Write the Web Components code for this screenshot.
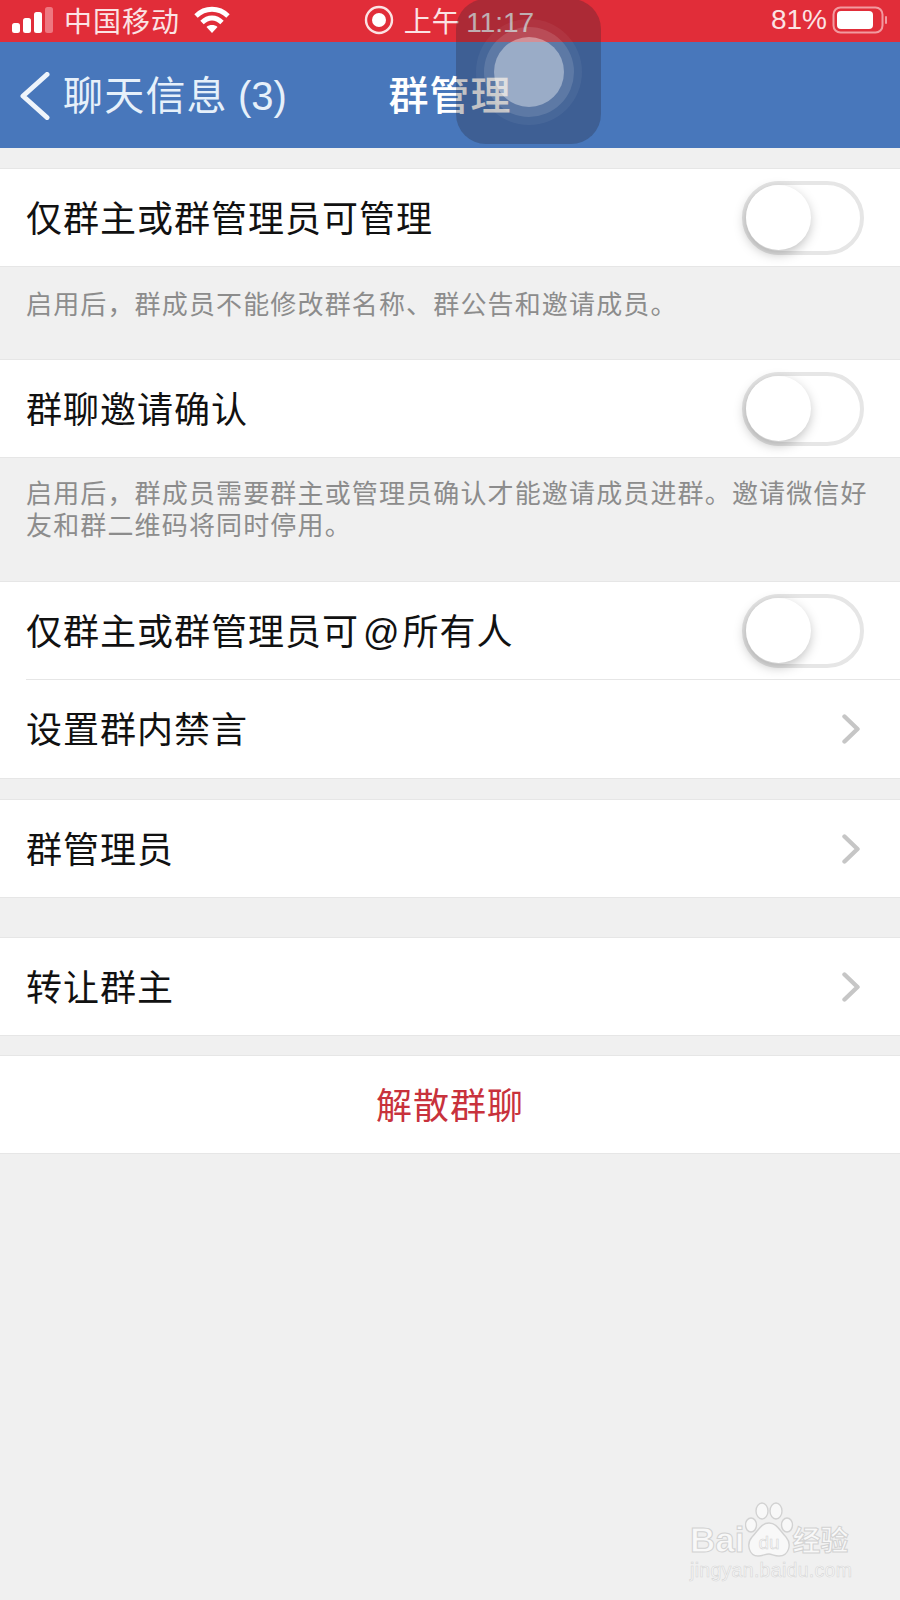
<!DOCTYPE html>
<html lang="zh">
<head>
<meta charset="utf-8">
<title>群管理</title>
<style>
    html, body { margin: 0; padding: 0; }
    body {
        width: 900px;
        height: 1600px;
        overflow: hidden;
        background: #f0f0f0;
        font-family: "Noto Sans CJK SC", "Liberation Sans", sans-serif;
        position: relative;
    }
</style>
</head>
<body>
<status-bar></status-bar>
<nav-bar title="群管理"></nav-bar>

<setting-group style="margin-top: 20px">
    <setting-row label="仅群主或群管理员可管理" kind="toggle"></setting-row>
</setting-group>
<group-note style="height: 92px">启用后，群成员不能修改群名称、群公告和邀请成员。</group-note>

<setting-group>
    <setting-row label="群聊邀请确认" kind="toggle"></setting-row>
</setting-group>
<group-note style="height: 123px; padding-top: 18px">启用后，群成员需要群主或管理员确认才能邀请成员进群。邀请微信好友和群二维码将同时停用。</group-note>

<setting-group>
    <setting-row label="仅群主或群管理员可<span class='at'>@</span>所有人" kind="toggle"></setting-row>
    <setting-row label="设置群内禁言" kind="arrow" divider></setting-row>
</setting-group>

<setting-group style="margin-top: 20px">
    <setting-row label="群管理员" kind="arrow"></setting-row>
</setting-group>

<setting-group style="margin-top: 39px">
    <setting-row label="转让群主" kind="arrow"></setting-row>
</setting-group>

<setting-group style="margin-top: 19px">
    <setting-row label="解散群聊" kind="danger"></setting-row>
</setting-group>

<assistive-touch></assistive-touch>
<baidu-mark></baidu-mark>

<script>
class StatusBar extends HTMLElement {
    constructor() {
        super();
        this.attachShadow({ mode: 'open' });
        this.shadowRoot.innerHTML = `
        <style>
        :host {
            display: grid;
            grid-template-columns: 1fr auto 1fr;
            align-items: center;
            height: 42px;
            padding: 0 14px 5px 12px;
            box-sizing: border-box;
            background: #e12d39;
            color: #fbe3e4;
            font-size: 28px;
        }
        .side { display: flex; align-items: center; }
        .right { justify-content: flex-end; }
        .mid { display: flex; align-items: center; gap: 10px; }
        .carrier { margin-left: 10px; letter-spacing: 1px; }
        .wifi { margin-left: 14px; }
        svg { display: block; }
        .num { font-family: "Liberation Sans", sans-serif; }
        .pct { margin-right: 5px; }
        .battery { margin-right: -2px; }
        </style>
        <div class="side">
            <svg width="42" height="26" viewBox="0 0 42 26">
                <rect x="0" y="16" width="8" height="10" rx="2.5" fill="#fff"/>
                <rect x="11" y="11" width="8" height="15" rx="2.5" fill="#fff"/>
                <rect x="22" y="5" width="8" height="21" rx="2.5" fill="#fff"/>
                <rect x="33" y="0" width="8" height="26" rx="2.5" fill="#ee7780"/>
            </svg>
            <span class="carrier">中国移动</span>
            <svg class="wifi" width="36" height="28" viewBox="0 0 36 28" fill="none" stroke="#fff" stroke-width="4.8">
                <path d="M2 10 C11 1 25 1 34 10"/>
                <path d="M8 16.5 C14 10.5 22 10.5 28 16.5"/>
                <path d="M18 27 L12.5 21 C15.5 18.4 20.5 18.4 23.5 21 Z" fill="#fff" stroke="none"/>
            </svg>
        </div>
        <div class="mid">
            <svg width="30" height="30" viewBox="0 0 30 30">
                <circle cx="15" cy="15" r="13" fill="none" stroke="#fbe3e4" stroke-width="2.4"/>
                <circle cx="15" cy="15" r="7" fill="#fff"/>
            </svg>
            <span>上午 <span class="num">11:17</span></span>
        </div>
        <div class="side right">
            <span class="num pct">81%</span>
            <svg class="battery" width="56" height="28" viewBox="0 0 56 28">
                <rect x="1.5" y="1.5" width="49" height="25" rx="7" fill="none" stroke="#f29aa0" stroke-width="2"/>
                <rect x="5" y="5" width="36" height="18" rx="4" fill="#fff"/>
                <rect x="53" y="10" width="2" height="8" rx="1" fill="#f29aa0"/>
            </svg>
        </div>
        `;
    }
}

class NavBar extends HTMLElement {
    constructor() {
        super();
        this.attachShadow({ mode: 'open' });
        const title = this.getAttribute('title') || '';
        this.shadowRoot.innerHTML = `
        <style>
        :host {
            display: grid;
            grid-template-columns: 1fr auto 1fr;
            align-items: center;
            height: 106px;
            padding: 0 20px 4px;
            box-sizing: border-box;
            background: #4877bb;
            color: #e6f0fa;
        }
        .back { display: flex; align-items: center; gap: 13px; font-size: 40px; letter-spacing: 1.2px; }
        .back svg { display: block; margin-top: 5px; }
        .num { font-family: "Liberation Sans", sans-serif; letter-spacing: 0; }
        h1 { margin: 0; font-size: 40px; font-weight: 500; color: #fff; letter-spacing: 1px; }
        </style>
        <div class="back">
            <svg width="30" height="48" viewBox="0 0 30 48" fill="none" stroke="#eef4fb" stroke-width="5" stroke-linecap="round" stroke-linejoin="round">
                <path d="M27 2.5 L3 24 L27 45.5"/>
            </svg>
            <span>聊天信息 <span class="num">(3)</span></span>
        </div>
        <h1>${title}</h1>
        <div></div>
        `;
    }
}

class SettingGroup extends HTMLElement {
    constructor() {
        super();
        this.attachShadow({ mode: 'open' });
        this.shadowRoot.innerHTML = `
        <style>
        :host {
            display: block;
            background: #fff;
            border-top: 1px solid #e6e6e6;
            border-bottom: 1px solid #e6e6e6;
        }
        </style>
        <slot></slot>
        `;
    }
}

class SettingRow extends HTMLElement {
    constructor() {
        super();
        this.attachShadow({ mode: 'open' });
        const label = this.getAttribute('label') || '';
        const kind = this.getAttribute('kind') || 'arrow';
        let end = '';
        if (kind === 'toggle') {
            end = '<div class="toggle"><div class="knob"></div></div>';
        } else if (kind === 'arrow') {
            end = `<svg width="18" height="30" viewBox="0 0 18 30" fill="none" stroke="#c6c6c6" stroke-width="4.4" stroke-linecap="round" stroke-linejoin="round"><path d="M2.5 2.5 L15.5 15 L2.5 27.5"/></svg>`;
        }
        this.shadowRoot.innerHTML = `
        <style>
        :host {
            display: block;
            padding-left: 26px;
            font-size: 36px;
            color: #111;
        }
        .row {
            display: flex;
            align-items: center;
            justify-content: space-between;
            height: 97px;
            padding-right: 36px;
            letter-spacing: 1px;
        }
        .row > span { margin-bottom: 4px; }
        .at { font-family: "Liberation Sans", sans-serif; margin: 0 2px 0 4px; }
        :host([divider]) .row { border-top: 1px solid #e6e6e6; height: 98px; }
        :host([kind="arrow"]) .row { padding-right: 40px; }
        :host([kind="danger"]) { padding-left: 0; }
        :host([kind="danger"]) .row {
            justify-content: center;
            padding-right: 0;
            color: #c8323c;
        }
        .toggle {
            position: relative;
            width: 122px;
            height: 74px;
            box-sizing: border-box;
            border: 4px solid #e6e6e6;
            border-radius: 37px;
            background: #fff;
        }
        .knob {
            position: absolute;
            left: 0;
            top: 0;
            width: 65px;
            height: 65px;
            border-radius: 50%;
            background: #fff;
            box-shadow: -1px 4px 12px rgba(0,0,0,.26);
        }
        </style>
        <div class="row"><span>${label}</span>${end}</div>
        `;
    }
}

class GroupNote extends HTMLElement {
    constructor() {
        super();
        this.attachShadow({ mode: 'open' });
        this.shadowRoot.innerHTML = `
        <style>
        :host {
            display: block;
            box-sizing: border-box;
            padding: 20px 20px 0 26px;
            font-size: 26px;
            line-height: 32px;
            letter-spacing: 1.15px;
            color: #8c8c8c;
        }
        </style>
        <slot></slot>
        `;
    }
}

class AssistiveTouch extends HTMLElement {
    constructor() {
        super();
        this.attachShadow({ mode: 'open' });
        this.shadowRoot.innerHTML = `
        <style>
        :host {
            position: absolute;
            left: 456px;
            top: -1px;
            width: 145px;
            height: 145px;
            border-radius: 30px;
            background: rgba(35,35,45,.28);
            display: flex;
            align-items: center;
            justify-content: center;
        }
        .outer, .mid, .core { border-radius: 50%; display: flex; align-items: center; justify-content: center; }
        .outer { width: 106px; height: 106px; background: rgba(255,255,255,.05); }
        .mid { width: 90px; height: 90px; background: rgba(255,255,255,.12); }
        .core { width: 70px; height: 70px; background: rgba(255,255,255,.38); }
        </style>
        <div class="outer"><div class="mid"><div class="core"></div></div></div>
        `;
    }
}

class BaiduMark extends HTMLElement {
    constructor() {
        super();
        this.attachShadow({ mode: 'open' });
        this.shadowRoot.innerHTML = `
        <style>
        :host {
            position: absolute;
            left: 690px;
            top: 1502px;
            width: 172px;
            color: #f8f8f8;
            font-family: "Liberation Sans", sans-serif;
        }
        .top { display: flex; align-items: flex-end; height: 60px; }
        .logo {
            font-size: 35px;
            font-weight: 700;
            line-height: 36px;
            margin-bottom: 4px;
            -webkit-text-stroke: 1px #d2d2d2;
        }
        .paw { margin: 0 0 0 1px; display: block; }
        .cn {
            font-family: "Noto Sans CJK SC", sans-serif;
            font-size: 28px;
            line-height: 38px;
            font-weight: 700;
            margin-bottom: 4px;
            -webkit-text-stroke: 1px #d2d2d2;
            margin-left: -3px;
        }
        .url {
            margin-top: -3px;
            font-size: 19.5px;
            line-height: 22px;
            letter-spacing: 0.3px;
            white-space: nowrap;
            -webkit-text-stroke: 0.6px #d6d6d6;
        }
        </style>
        <div class="top">
            <span class="logo">Bai</span>
            <svg class="paw" width="50" height="60" viewBox="0 0 50 60" fill="#f8f8f8" stroke="#d2d2d2" stroke-width="1.4">
                <ellipse cx="17" cy="9" rx="6" ry="8"/>
                <ellipse cx="31" cy="9" rx="6" ry="8"/>
                <ellipse cx="6" cy="23" rx="5.5" ry="7"/>
                <ellipse cx="42" cy="23" rx="5.5" ry="7"/>
                <path d="M24 21 C32 21 35 29 41 35 C47 42 44 54 34 54 C29 54 27 52 24 52 C20 52 18 54 13 54 C4 54 1 42 7 35 C13 29 16 21 24 21 Z"/>
                <text x="24" y="47" font-size="19" text-anchor="middle" font-family="Liberation Sans" font-weight="400" stroke-width="0.5">du</text>
            </svg>
            <span class="cn">经验</span>
        </div>
        <div class="url">jingyan.baidu.com</div>
        `;
    }
}

customElements.define('status-bar', StatusBar);
customElements.define('nav-bar', NavBar);
customElements.define('setting-group', SettingGroup);
customElements.define('setting-row', SettingRow);
customElements.define('group-note', GroupNote);
customElements.define('assistive-touch', AssistiveTouch);
customElements.define('baidu-mark', BaiduMark);
</script>
</body>
</html>
